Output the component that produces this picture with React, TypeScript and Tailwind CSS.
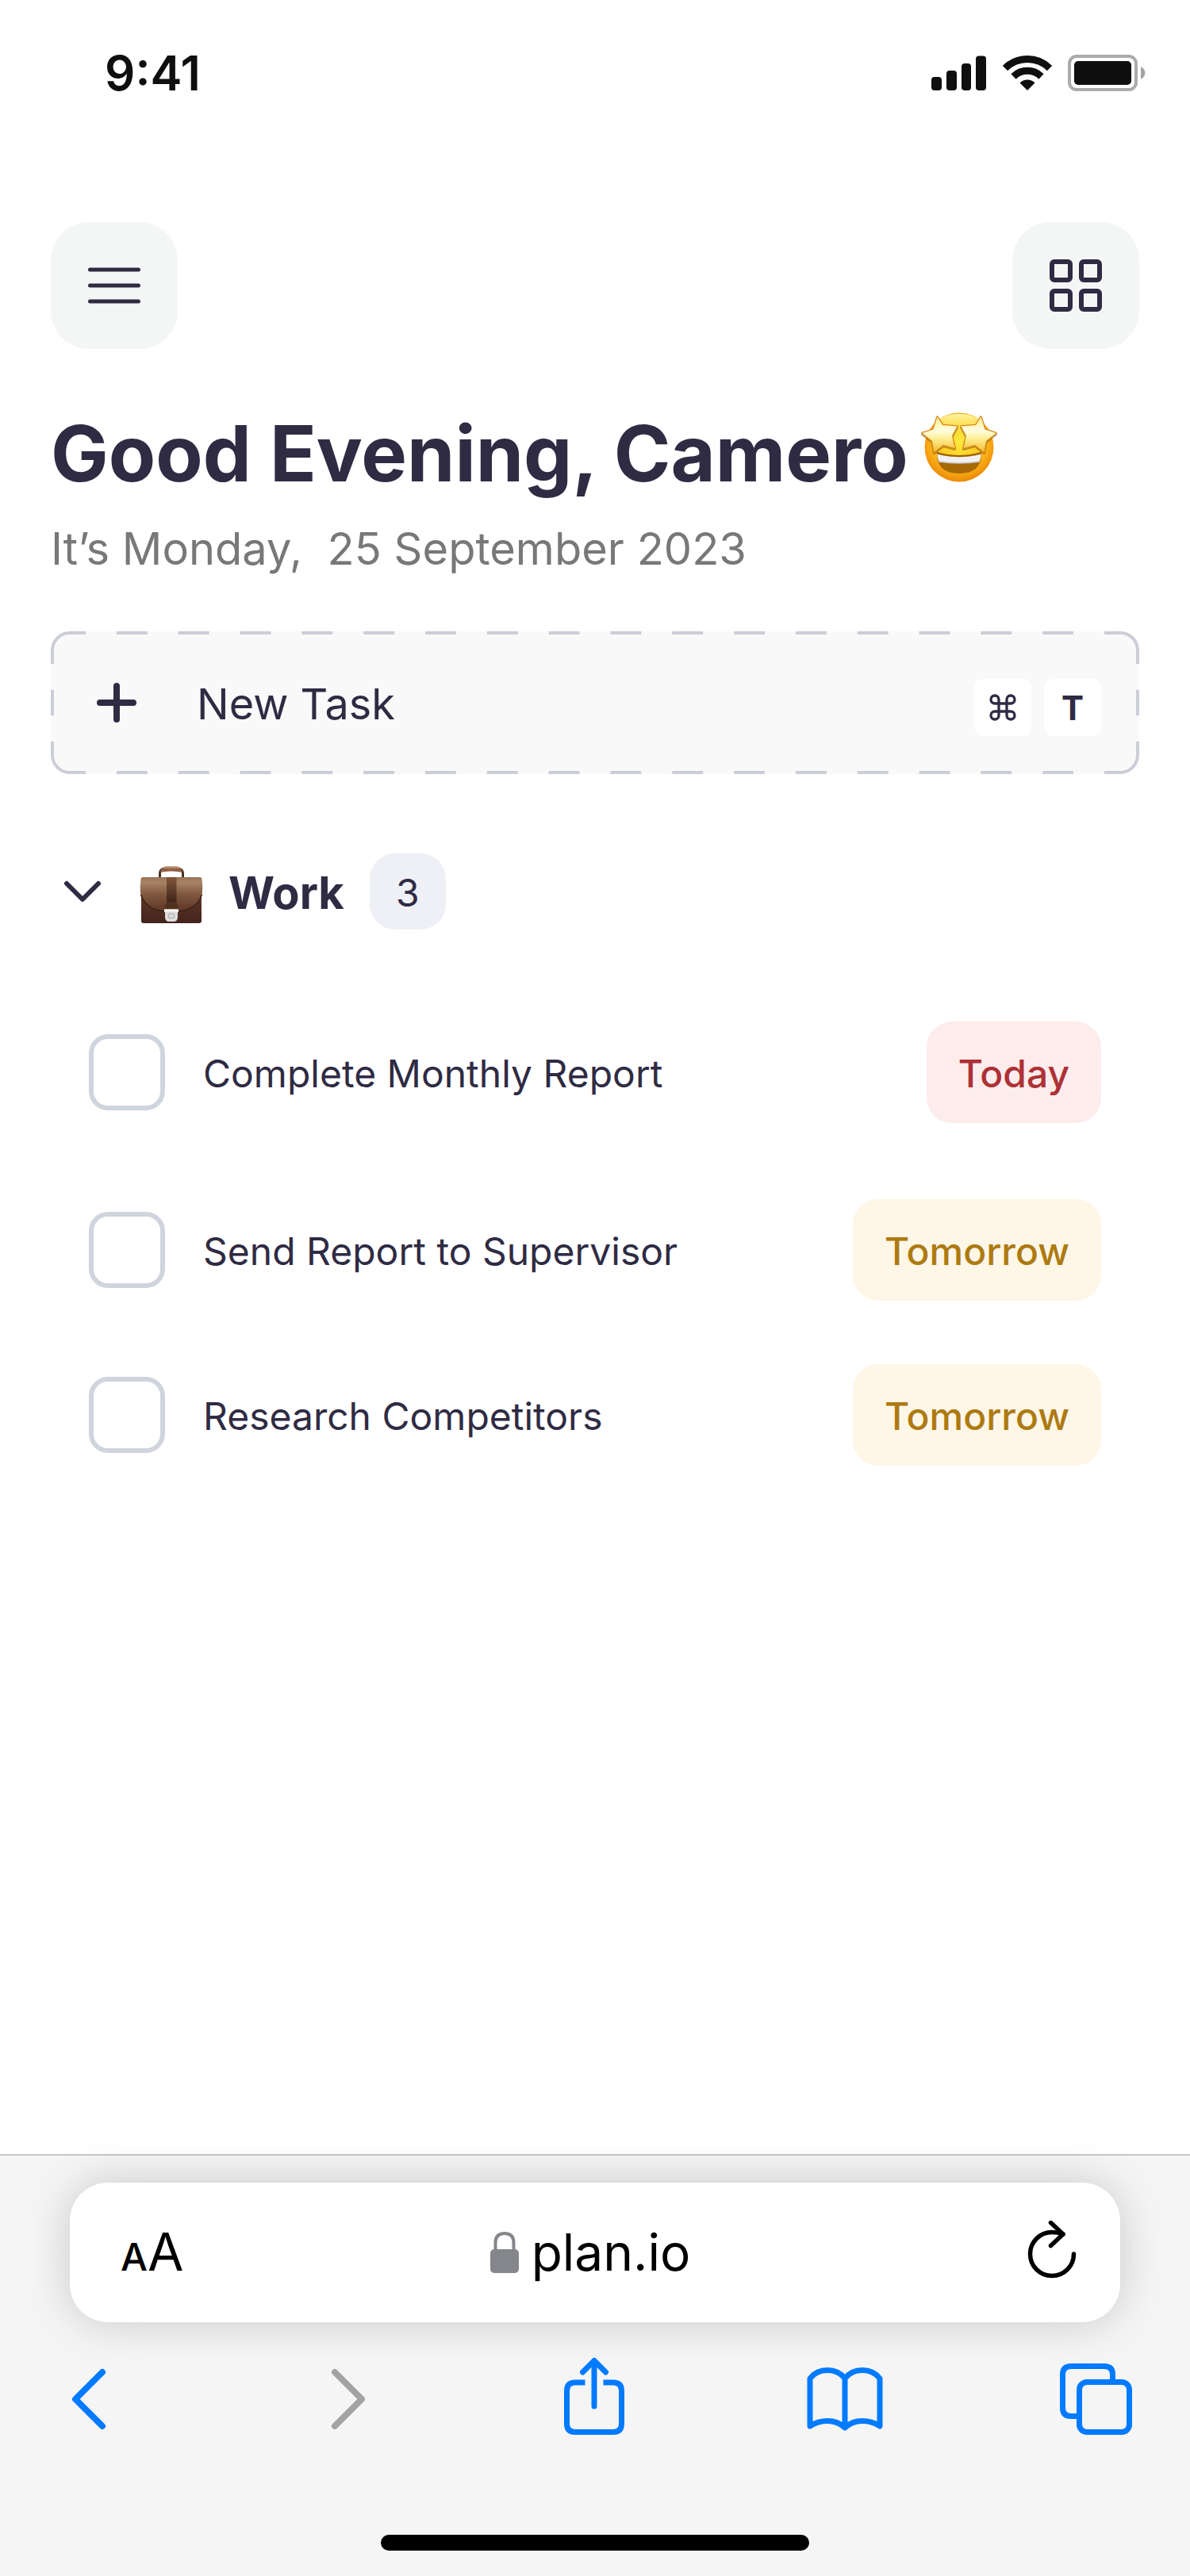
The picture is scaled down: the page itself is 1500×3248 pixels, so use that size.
import React, { useState } from 'react';
import { Command } from 'lucide-react';

type Task = { id: string; title: string; due: 'Today' | 'Tomorrow' };

const TASKS: Task[] = [
  { id: 'report', title: 'Complete Monthly Report', due: 'Today' },
  { id: 'send', title: 'Send Report to Supervisor', due: 'Tomorrow' },
  { id: 'research', title: 'Research Competitors', due: 'Tomorrow' },
];

function SignalIcon() {
  return (
    <svg viewBox="0 0 70 44" className="h-11 w-[70px]" fill="#0f0f0f" aria-hidden="true">
      <rect x="0" y="27" width="13" height="17" rx="4" />
      <rect x="19" y="19" width="13" height="25" rx="4" />
      <rect x="38" y="10" width="12" height="34" rx="4" />
      <rect x="56" y="0.5" width="13" height="43.5" rx="4" />
    </svg>
  );
}

function WifiIcon() {
  return (
    <svg viewBox="0 0 62 44" className="h-11 w-[62px]" aria-hidden="true">
      <path d="M3 16 A40 40 0 0 1 59 16" fill="none" stroke="#0f0f0f" strokeWidth="9" />
      <path d="M13.5 26.5 A25 25 0 0 1 48.5 26.5" fill="none" stroke="#0f0f0f" strokeWidth="9" />
      <path d="M31 44 L21.5 34.5 A13.5 13.5 0 0 1 40.5 34.5 Z" fill="#0f0f0f" />
    </svg>
  );
}

function BatteryIcon() {
  return (
    <svg viewBox="0 0 98 46" className="h-[46px] w-[98px]" aria-hidden="true">
      <rect x="2" y="2" width="84" height="42" rx="9" fill="none" stroke="#ababab" strokeWidth="4" />
      <rect x="8" y="8" width="72" height="30" rx="5" fill="#0f0f0f" />
      <path d="M92 15 C95 16.5 97.3 19.5 97.3 23 C97.3 26.5 95 29.5 92 31 Z" fill="#a3a3a3" />
    </svg>
  );
}

function StarEyes() {
  const star =
    'M20 5.5 L26.5 16 L45 17.5 L38.5 29.5 L42 45 L27.5 41 L16 50 L13.5 36 L1 26 L15 21.5 Z';
  return (
    <svg viewBox="0 0 96 88" className="h-[88px] w-24 shrink-0" role="img" aria-label="Star-struck face">
      <defs>
        <radialGradient id="face" cx="0.5" cy="0.42" r="0.58">
          <stop offset="0" stopColor="#fdea3c" />
          <stop offset="0.55" stopColor="#fcc822" />
          <stop offset="0.85" stopColor="#f59e10" />
          <stop offset="1" stopColor="#e88a08" />
        </radialGradient>
        <linearGradient id="shine" x1="0" y1="0" x2="0" y2="1">
          <stop offset="0" stopColor="#fff7a8" />
          <stop offset="1" stopColor="#fde33c" stopOpacity="0" />
        </linearGradient>
        <linearGradient id="star" x1="0" y1="0" x2="0" y2="1">
          <stop offset="0" stopColor="#fdeb8a" />
          <stop offset="0.4" stopColor="#fffde0" />
          <stop offset="0.6" stopColor="#fdf09a" />
          <stop offset="1" stopColor="#f6bc2c" />
        </linearGradient>
      </defs>
      <circle cx="48" cy="44" r="43.5" fill="url(#face)" />
      <ellipse cx="48" cy="18" rx="32" ry="16" fill="url(#shine)" />
      <path d="M20 52 Q48 60 76 52 Q76 77 48 77 Q20 77 20 52 Z" fill="#a56a05" />
      <path d="M20.5 52.5 Q48 60 75.5 52.5 Q75.5 59 73 62 Q48 66 23 62 Q20.5 59 20.5 52.5 Z" fill="#f1f1f4" />
      <path d="M22 62 Q48 66 74 62" fill="none" stroke="#c9c5bd" strokeWidth="1.5" />
      <path d="M20 51 Q48 59 76 51" fill="none" stroke="#9a5c06" strokeWidth="2" />
      <g strokeLinejoin="round">
        <path d={star} transform="translate(0.5 1.5)" fill="#8a4b05" stroke="#8a4b05" strokeWidth="3" opacity="0.5" />
        <path d={star} transform="translate(95.5 1.5) scale(-1 1)" fill="#8a4b05" stroke="#8a4b05" strokeWidth="3" opacity="0.5" />
        <path d={star} transform="translate(0.5 0)" fill="url(#star)" stroke="#d58a1c" strokeWidth="2.5" />
        <path d={star} transform="translate(95.5 0) scale(-1 1)" fill="url(#star)" stroke="#d58a1c" strokeWidth="2.5" />
        <path d={star} transform="translate(0.5 0)" fill="url(#star)" />
        <path d={star} transform="translate(95.5 0) scale(-1 1)" fill="url(#star)" />
      </g>
    </svg>
  );
}

function Briefcase() {
  return (
    <svg viewBox="0 0 80 72" className="h-[72px] w-20 shrink-0" role="img" aria-label="Briefcase">
      <defs>
        <linearGradient id="flap" x1="0" y1="0" x2="0" y2="1">
          <stop offset="0" stopColor="#9a7355" />
          <stop offset="0.15" stopColor="#a88365" />
          <stop offset="0.5" stopColor="#80583f" />
          <stop offset="1" stopColor="#5c3526" />
        </linearGradient>
        <linearGradient id="case" x1="0" y1="0" x2="0" y2="1">
          <stop offset="0" stopColor="#6b4433" />
          <stop offset="1" stopColor="#42231b" />
        </linearGradient>
        <linearGradient id="strap" x1="0" y1="0" x2="0" y2="1">
          <stop offset="0" stopColor="#80573b" />
          <stop offset="1" stopColor="#3f2418" />
        </linearGradient>
      </defs>
      <path d="M25.5 14 V9 Q26 3.5 31 3.5 H49 Q54 3.5 54.5 9 V14" fill="none" stroke="#4e2e20" strokeWidth="3" />
      <path d="M26 8 Q27 1 33 0.5 H47 Q53 1 54 8 Q48 6.5 40 6.5 Q32 6.5 26 8 Z" fill="#8f6045" />
      <path d="M30 2 H50" stroke="#c49372" strokeWidth="1.5" />
      <path d="M2 18 H78 V69 Q78 72 75 72 H5 Q2 72 2 69 Z" fill="url(#case)" />
      <path d="M4 14 H76 Q78.5 14 78.5 17 Q80 28 78.5 36 Q72 55 50 57 H30 Q8 55 1.5 36 Q0 28 1.5 17 Q1.5 14 4 14 Z" fill="url(#flap)" />
      <path d="M1.5 36 Q8 55 30 57 H50 Q72 55 78.5 36" fill="none" stroke="#3e2117" strokeWidth="1.5" />
      <rect x="34" y="14" width="12.5" height="32" fill="url(#strap)" />
      <path d="M31.5 56 V50 Q33 45 40 45 Q47 45 48.5 50 V56 Z" fill="#54301f" />
      <path d="M31 54.5 H49 V58 H48 V65 Q47.5 70 43 70 H37 Q32.5 70 32 65 V58 H31 Z" fill="#dcdcdc" />
      <path d="M31 54.5 H49 V57.5 H31 Z" fill="#f6f6f6" />
      <rect x="36.5" y="60" width="7" height="5.5" rx="1.5" fill="none" stroke="#a9a9a9" />
    </svg>
  );
}

/* Breaks a solid 4px outline into dashes, sixteen along and one down. */
function DashGaps() {
  return (
    <svg className="pointer-events-none absolute -inset-1 h-[calc(100%+8px)] w-[calc(100%+8px)]" stroke="#f9f9f9" strokeWidth="4" aria-hidden="true">
      <svg x="44" y="0" className="h-full w-[calc(100%-88px)] overflow-visible">
        <line x1="0" y1="2" x2="100%" y2="2" pathLength={33} strokeDasharray="1 1" />
      </svg>
      <svg x="44" y="-2" className="h-full w-[calc(100%-88px)] overflow-visible">
        <line x1="0" y1="100%" x2="100%" y2="100%" pathLength={33} strokeDasharray="1 1" />
      </svg>
      <svg x="0" y="41" className="h-[calc(100%-82px)] w-full overflow-visible">
        <line x1="2" y1="0" x2="2" y2="100%" pathLength={3} strokeDasharray="1 1" />
      </svg>
      <svg x="-2" y="41" className="h-[calc(100%-82px)] w-full overflow-visible">
        <line x1="100%" y1="0" x2="100%" y2="100%" pathLength={3} strokeDasharray="1 1" />
      </svg>
    </svg>
  );
}

function TaskRow({ task }: { task: Task }) {
  const tone = task.due === 'Today' ? 'bg-[#fdecec] text-[#ad3135]' : 'bg-[#fef6e6] text-[#ad7a11]';
  return (
    <li className="flex items-center first:mb-4">
      <input
        id={task.id}
        type="checkbox"
        className="size-24 shrink-0 appearance-none rounded-3xl border-[6px] border-[#d0d5dd] bg-white checked:bg-[#2f2b43]"
      />
      <label htmlFor={task.id} className="ml-12 flex-1 pt-1 text-[48px] leading-[64px]">
        {task.title}
      </label>
      <span className={`rounded-[32px] px-10 pb-[30px] pt-[34px] text-[48px] font-medium leading-[64px] ${tone}`}>{task.due}</span>
    </li>
  );
}

function BrowserBar() {
  return (
    <footer className="border-t-2 border-[#c6c6c6] bg-[#f5f5f5] px-[88px] pb-8 pt-[34px]">
      <div className="flex h-44 items-center justify-between rounded-[48px] bg-white pl-16 pr-[52px] text-black shadow-[0_0_56px_rgba(0,0,0,0.18)]">
        <button type="button" aria-label="Text size" className="flex w-24 items-baseline pt-1 leading-[80px]">
          <span className="text-[48px] font-medium">A</span>
          <span className="text-[66px]">A</span>
        </button>
        <a href="#address" className="flex items-center gap-4">
          <svg viewBox="0 0 36 52" className="h-[52px] w-9" aria-hidden="true">
            <path d="M6.5 24 V14 Q6.5 2 18 2 Q29.5 2 29.5 14 V24" fill="none" stroke="#85868b" strokeWidth="4" />
            <rect x="0" y="22" width="36" height="30" rx="5" fill="#85868b" />
          </svg>
          <span className="text-[64px] leading-[80px]">plan.io</span>
        </a>
        <button type="button" aria-label="Reload" className="flex w-[120px] justify-end">
          <svg viewBox="0 0 68 80" className="h-20 w-[68px]" fill="none" stroke="black" strokeWidth="5.5" strokeLinecap="round" strokeLinejoin="round" aria-hidden="true">
            <path d="M61.5 42 A27.5 27.5 0 1 1 34 14.5 Q41 14.5 48 17" />
            <path d="M32.5 2.5 L48 17 L32.5 31.5" />
          </svg>
        </button>
      </div>
      <nav aria-label="Browser" className="-ml-2 -mr-4 mt-10 flex h-28 items-center justify-between">
        <button type="button" aria-label="Back" className="w-24">
          <svg viewBox="0 0 96 112" className="h-28 w-24" fill="none" stroke="#007aff" strokeWidth="8" strokeLinecap="round" strokeLinejoin="round">
            <path d="M49 23 L15 57 L49 91" />
          </svg>
        </button>
        <button type="button" aria-label="Forward" disabled className="w-24">
          <svg viewBox="0 0 96 112" className="h-28 w-24" fill="none" stroke="#a3a3a3" strokeWidth="8" strokeLinecap="round" strokeLinejoin="round">
            <path d="M29 23 L63 57 L29 91" />
          </svg>
        </button>
        <button type="button" aria-label="Share" className="w-24">
          <svg viewBox="5 0 96 112" className="h-28 w-24" fill="none" stroke="#007aff" strokeWidth="7" strokeLinejoin="round">
            <path d="M36.5 36 H24 Q13.5 36 13.5 46.5 V88 Q13.5 98.5 24 98.5 H72 Q82.5 98.5 82.5 88 V46.5 Q82.5 36 72 36 H59.5" />
            <path d="M48 66 V9 M33.5 23 L48 8.5 L62.5 23" strokeLinecap="round" />
          </svg>
        </button>
        <button type="button" aria-label="Bookmarks" className="w-24">
          <svg viewBox="2 0 96 112" className="h-28 w-24 overflow-visible" fill="none" stroke="#007aff" strokeWidth="7" strokeLinecap="round" strokeLinejoin="round">
            <path d="M48 31 Q40 20.5 26 20.5 Q12 20.5 4 31 V91 Q14 84.500 26 84.500 Q39 84.500 48 93 Q57 84.500 70 84.500 Q82 84.500 92 91 V31 Q84 20.5 70 20.5 Q56 20.5 48 31 V93" />
          </svg>
        </button>
        <button type="button" aria-label="Tabs" className="w-24">
          <svg viewBox="0 0 96 112" className="h-28 w-24" fill="none" stroke="#007aff" strokeWidth="7">
            <path d="M27 78.5 H18 Q7.5 78.5 7.5 68 V26 Q7.5 15.5 18 15.5 H60 Q70.5 15.5 70.5 26 V36" />
            <rect x="28.5" y="35.5" width="63" height="63" rx="9.5" />
          </svg>
        </button>
      </nav>
      <div className="mx-auto mt-[116px] h-5 w-[540px] rounded-full bg-black" />
    </footer>
  );
}

export default function App() {
  const [open, setOpen] = useState(true);
  return (
    <div className="flex min-h-screen flex-col bg-white font-['Inter',sans-serif] text-[#2f2b43]">
      <div className="flex h-[184px] items-center justify-between pl-[132px] pr-14 text-[#0f0f0f]">
        <span className="text-[60px] font-semibold leading-[72px]">9:41</span>
        <div className="flex items-center gap-5">
          <SignalIcon />
          <WifiIcon />
          <BatteryIcon />
        </div>
      </div>

      <main className="flex-1 px-16 pt-24">
        <header className="flex justify-between">
          <button type="button" aria-label="Menu" className="flex size-40 items-center justify-center rounded-[48px] bg-[#f4f6f6]">
            <svg viewBox="0 0 66 46" className="h-[46px] w-[66px]" stroke="#2f2b43" strokeWidth="5" strokeLinecap="round">
              <path d="M2.5 3 H63.5 M2.5 23 H63.5 M2.5 43 H63.5" />
            </svg>
          </button>
          <button type="button" aria-label="Apps" className="flex size-40 items-center justify-center rounded-[48px] bg-[#f4f6f6]">
            <svg viewBox="0 0 66 66" className="size-[66px]" fill="none" stroke="#2f2b43" strokeWidth="6">
              <rect x="3" y="3" width="23" height="23" rx="3" />
              <rect x="40" y="3" width="23" height="23" rx="3" />
              <rect x="3" y="40" width="23" height="23" rx="3" />
              <rect x="40" y="40" width="23" height="23" rx="3" />
            </svg>
          </button>
        </header>

        <div className="mt-[72px] flex items-start gap-6">
          <h1 className="text-[97px] font-bold leading-[120px]">Good Evening, Camero</h1>
          <span className="-ml-2 mt-2">
            <StarEyes />
          </span>
        </div>
        <p className="mt-6 text-[56px] leading-[72px] text-[#787878]">It’s Monday,&nbsp; 25 September 2023</p>

        <button
          type="button"
          className="relative mt-[68px] flex h-[180px] w-full items-center rounded-3xl border-4 border-[#cbcdd8] bg-[#f9f9f9] pl-[54px] pr-11 text-left"
        >
          <DashGaps />
          <svg viewBox="0 0 50 50" className="size-[50px]" stroke="#2f2b43" strokeWidth="8" strokeLinecap="round" aria-hidden="true">
            <path d="M25 4 V46 M4 25 H46" />
          </svg>
          <span className="ml-[76px] flex-1 pt-1 text-[54px] leading-[72px]">New Task</span>
          <span className="mt-3 flex gap-4">
            <kbd className="flex size-[72px] items-center justify-center rounded-xl bg-white">
              <Command className="size-10" strokeWidth={2} aria-label="Command" />
            </kbd>
            <kbd className="flex size-[72px] items-center justify-center rounded-xl bg-white font-['Inter',sans-serif] text-[42px] font-bold">T</kbd>
          </span>
        </button>

        <section className="mt-[100px]">
          <button type="button" aria-expanded={open} onClick={() => setOpen(!open)} className="ml-4 flex items-center">
            <svg viewBox="0 0 48 28" className="h-7 w-12" fill="none" stroke="#2f2b43" strokeWidth="6" strokeLinecap="round" strokeLinejoin="round" aria-hidden="true">
              <path d="M4 4 L24 24 L44 4" />
            </svg>
            <span className="ml-12 mt-2">
              <Briefcase />
            </span>
            <span className="ml-8 pt-1 text-[56px] font-bold leading-[72px]">Work</span>
            <span className="ml-8 flex size-24 items-center justify-center rounded-[32px] bg-[#eff0f6] pt-1 text-[48px]">3</span>
          </button>
          {open && (
            <ul className="mt-[116px] flex flex-col gap-20 px-12">
              {TASKS.map((task) => (
                <TaskRow key={task.id} task={task} />
              ))}
            </ul>
          )}
        </section>
      </main>

      <BrowserBar />
    </div>
  );
}
